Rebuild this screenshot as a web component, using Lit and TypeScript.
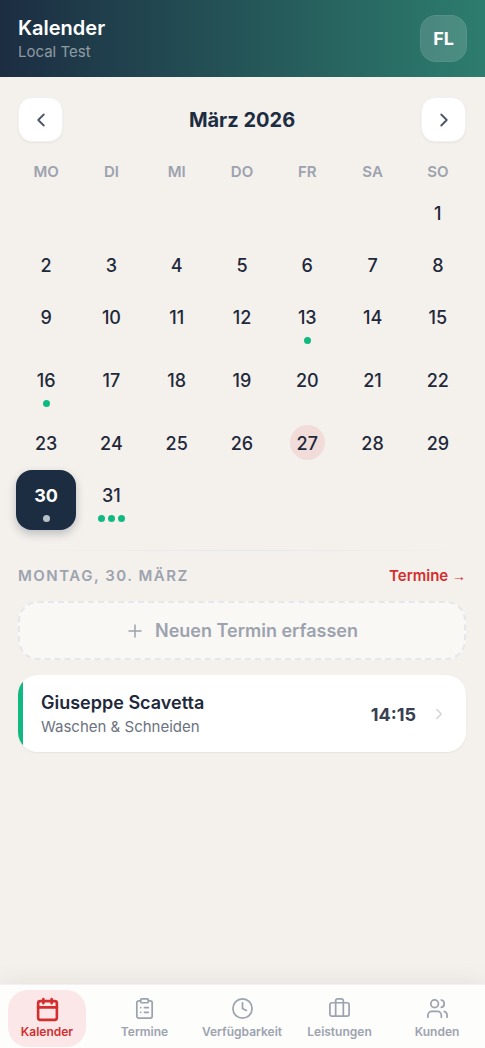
import { LitElement, html, css, svg, nothing } from "lit";
import { customElement, state } from "lit/decorators.js";
import { classMap } from "lit/directives/class-map.js";

const icon = (content: unknown, cls: string, width = 2) => html`
  <svg class=${cls} viewBox="0 0 24 24" fill="none" stroke="currentColor" stroke-width=${width}
    stroke-linecap="round" stroke-linejoin="round" aria-hidden="true">${content}</svg>`;

const chevronLeft = svg`<path d="M15 18l-6-6 6-6"/>`;
const chevronRight = svg`<path d="M9 18l6-6-6-6"/>`;
const plus = svg`<path d="M12 4v16M4 12h16"/>`;

const TABS = [
  { label: "Kalender", glyph: svg`<rect x="3" y="4" width="18" height="18" rx="2"/><path d="M16 2v4M8 2v4M3 10h18"/>` },
  { label: "Termine", glyph: svg`<path d="M16 4h2a2 2 0 0 1 2 2v14a2 2 0 0 1-2 2H6a2 2 0 0 1-2-2V6a2 2 0 0 1 2-2h2"/><rect x="8" y="2" width="8" height="4" rx="1"/><path d="M12 11h4M12 16h4M8 11h.01M8 16h.01"/>` },
  { label: "Verfügbarkeit", glyph: svg`<circle cx="12" cy="12" r="10"/><path d="M12 6v6l4 2"/>` },
  { label: "Leistungen", glyph: svg`<path d="M16 20V4a2 2 0 0 0-2-2h-4a2 2 0 0 0-2 2v16"/><rect x="2" y="6" width="20" height="14" rx="2"/>` },
  { label: "Kunden", glyph: svg`<path d="M16 21v-2a4 4 0 0 0-4-4H6a4 4 0 0 0-4 4v2"/><circle cx="9" cy="7" r="4"/><path d="M22 21v-2a4 4 0 0 0-3-3.87M16 3.13a4 4 0 0 1 0 7.75"/>` },
];

const WEEKDAYS = ["Mo", "Di", "Mi", "Do", "Fr", "Sa", "So"];
const TODAY = 27;
const APPOINTMENTS: Record<number, number> = { 13: 1, 16: 1, 30: 1, 31: 3 };

@customElement("app-root")
export class AppRoot extends LitElement {
  @state() private selected = 30;
  @state() private tab = "Kalender";

  static styles = css`
    :host {
      display: flex;
      flex-direction: column;
      min-height: 100vh;
      background: #f4f0eb;
      color: #1e293b;
      font-family: Inter, "Liberation Sans", sans-serif;
      font-size: 18px;
    }
    * { box-sizing: border-box; }
    button {
      font: inherit;
      color: inherit;
      border: 0;
      background: none;
      padding: 0;
      margin: 0;
      cursor: pointer;
    }
    h1, h2, h3, p { margin: 0; }
    svg { display: block; flex: none; }

    .topbar {
      display: flex;
      align-items: center;
      justify-content: space-between;
      padding: 14px 18px 15px;
      background: linear-gradient(90deg, #1c2d42 0%, #2d7d6e 100%);
      color: #fff;
    }
    .title { font-size: 20px; line-height: 28px; font-weight: 600; }
    .subtitle { font-size: 15px; line-height: 20px; color: rgba(255, 255, 255, 0.5); }
    .avatar {
      width: 47px;
      height: 47px;
      border-radius: 16px;
      border: 1px solid rgba(255, 255, 255, 0.2);
      background: rgba(255, 255, 255, 0.15);
      background-clip: padding-box;
      font-weight: 700;
      color: #fff;
    }

    main { flex: 1; padding-right: 1px; }
    .month {
      display: flex;
      align-items: center;
      justify-content: space-between;
      padding: 20px 18px 16px;
    }
    .month h2 { font-size: 20px; line-height: 28px; font-weight: 700; color: #1c2d42; }
    .step {
      display: grid;
      place-items: center;
      width: 45px;
      height: 45px;
      border-radius: 14px;
      border: 1px solid #f0f1f3;
      background: #fff;
      color: #4b5563;
      box-shadow: 0 1px 2px rgba(0, 0, 0, 0.05);
    }
    .i18 { width: 18px; height: 18px; }
    .i22 { width: 22px; height: 22px; }
    .i23 { width: 23px; height: 23px; }
    .i25 { width: 25px; height: 25px; }

    .grid {
      display: grid;
      grid-template-columns: repeat(7, minmax(0, 1fr));
      column-gap: 5px;
      padding: 0 16px;
    }
    .weekdays {
      font-size: 15px;
      line-height: 28px;
      font-weight: 600;
      color: #9ca3af;
      text-align: center;
      text-transform: uppercase;
      margin-bottom: 2px;
    }
    .days { row-gap: 3px; align-items: start; }
    .day {
      display: flex;
      flex-direction: column;
      align-items: center;
      padding: 7px 0;
      border-radius: 16px;
      font-weight: 500;
    }
    .day.first { grid-column-start: 7; }
    .num {
      width: 35px;
      height: 35px;
      line-height: 37px;
      border-radius: 50%;
      text-align: center;
    }
    .today .num { background: #f1dcd9; }
    .dots { display: flex; gap: 3px; margin: 3px 0 1px; }
    .dot { width: 7px; height: 7px; border-radius: 50%; background: #10b981; }
    .selected {
      background: #1c2d42;
      color: #fff;
      font-weight: 700;
      box-shadow: 0 4px 8px rgba(28, 45, 66, 0.25);
    }
    .selected .dot { background: rgba(255, 255, 255, 0.7); }

    .divider {
      height: 1px;
      margin: 20px 18px 0;
      background: linear-gradient(90deg, transparent, #e5e7eb, transparent);
    }
    .dayhead {
      display: flex;
      align-items: center;
      justify-content: space-between;
      padding: 14px 18px 14px;
      line-height: 22px;
    }
    .dayhead h3 {
      font-size: 15px;
      font-weight: 600;
      letter-spacing: 1.5px;
      text-transform: uppercase;
      color: #9ca3af;
    }
    .dayhead a { font-size: 15px; font-weight: 600; color: #d32f2f; text-decoration: none; }
    .arrow { font-family: "Liberation Sans", sans-serif; font-size: 14px; line-height: 1; }

    .list { display: grid; gap: 15px; padding: 0 18px 18px; }
    .add {
      display: flex;
      align-items: center;
      justify-content: center;
      gap: 11px;
      height: 59px;
      border: 2px dashed #e5e7eb;
      border-radius: 20px;
      background: rgba(255, 255, 255, 0.5);
      color: #9ca3af;
      font-weight: 600;
    }
    .card {
      display: flex;
      align-items: center;
      padding: 15px 18px 14px 23px;
      border-radius: 20px;
      background: linear-gradient(90deg, #10b981 5px, #fff 5px);
      text-align: left;
      box-shadow: 0 1px 2px rgba(0, 0, 0, 0.06);
    }
    .who { flex: 1; min-width: 0; }
    .name { display: block; line-height: 26px; font-weight: 600; }
    .service { display: block; font-size: 15px; line-height: 22px; color: #6b7280; }
    .time { font-weight: 700; color: #374151; margin-right: 14px; }
    .faint { color: #d1d5db; }

    .tabs {
      position: sticky;
      bottom: 0;
      display: flex;
      justify-content: space-between;
      padding: 5px 9px 1px 8px;
      border-top: 1px solid #f1f1f2;
      background: #fdfdfc;
      box-shadow: 0 -4px 24px rgba(0, 0, 0, 0.06);
    }
    .tab {
      display: flex;
      flex-direction: column;
      align-items: center;
      width: 78px;
      height: 57px;
      padding-top: 7px;
      gap: 5px;
      border-radius: 20px;
      color: #9ca3af;
      font-size: 12px;
      line-height: 16px;
      font-weight: 600;
      white-space: nowrap;
    }
    .glyph { display: grid; place-items: center; height: 22px; }
    .tab.active { background: #fbe7e8; color: #d32f2f; }
  `;

  private renderDay(day: number) {
    const count = APPOINTMENTS[day] ?? 0;
    const classes = {
      day: true,
      first: day === 1,
      today: day === TODAY,
      selected: day === this.selected,
    };
    return html`<button class=${classMap(classes)} @click=${() => (this.selected = day)}>
      <span class="num">${day}</span>
      ${count ? html`<span class="dots">${Array.from({ length: count }, () => html`<i class="dot"></i>`)}</span>` : nothing}
    </button>`;
  }

  render() {
    return html`
      <header class="topbar">
        <div>
          <h1 class="title">Kalender</h1>
          <p class="subtitle">Local Test</p>
        </div>
        <button class="avatar">FL</button>
      </header>
      <main>
        <div class="month">
          <button class="step" aria-label="Vorheriger Monat">${icon(chevronLeft, "i22")}</button>
          <h2>März 2026</h2>
          <button class="step" aria-label="Nächster Monat">${icon(chevronRight, "i22")}</button>
        </div>
        <div class="grid weekdays">${WEEKDAYS.map((d) => html`<span>${d}</span>`)}</div>
        <div class="grid days">${Array.from({ length: 31 }, (_, i) => this.renderDay(i + 1))}</div>
        <div class="divider"></div>
        <div class="dayhead">
          <h3>Montag, 30. März</h3>
          <a href="#termine">Termine <span class="arrow">→</span></a>
        </div>
        <div class="list">
          <button class="add">${icon(plus, "i18")}<span>Neuen Termin erfassen</span></button>
          <button class="card">
            <span class="who">
              <span class="name">Giuseppe Scavetta</span>
              <span class="service">Waschen &amp; Schneiden</span>
            </span>
            <span class="time">14:15</span>
            <span class="faint">${icon(chevronRight, "i18")}</span>
          </button>
        </div>
      </main>
      <nav class="tabs">
        ${TABS.map((t) => {
          const active = t.label === this.tab;
          return html`<button class=${classMap({ tab: true, active })} @click=${() => (this.tab = t.label)}>
            <span class="glyph">${icon(t.glyph, active ? "i25" : "i23", active ? 2.5 : 1.8)}</span>
            <span>${t.label}</span>
          </button>`;
        })}
      </nav>
    `;
  }
}
